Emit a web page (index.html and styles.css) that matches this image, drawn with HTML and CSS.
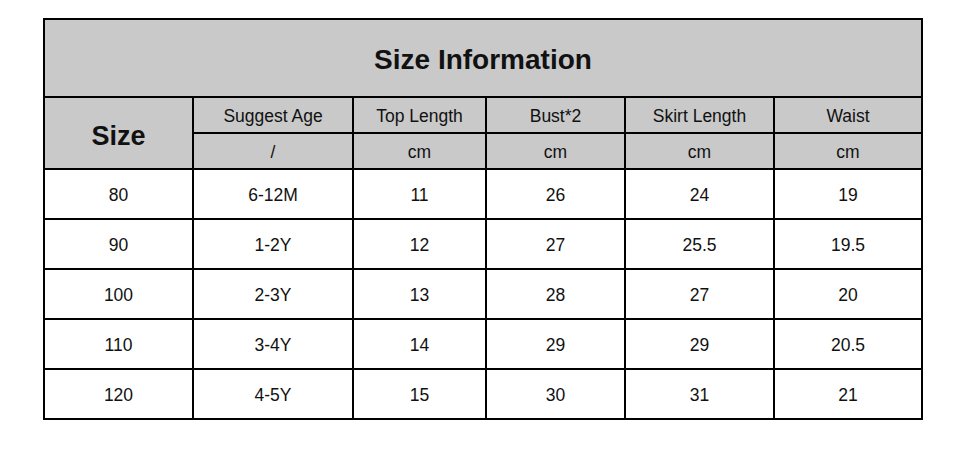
FILE: index.html
```html
<!DOCTYPE html>
<html>
<head>
<meta charset="utf-8">
<link rel="stylesheet" href="styles.css">
</head>
<body>
<div class="size-table">
  <div class="cell head title">Size Information</div>
  <div class="cell head size-label">Size</div>
  <div class="cell head">Suggest Age</div>
  <div class="cell head">Top Length</div>
  <div class="cell head">Bust*2</div>
  <div class="cell head">Skirt Length</div>
  <div class="cell head">Waist</div>
  <div class="cell head">/</div>
  <div class="cell head">cm</div>
  <div class="cell head">cm</div>
  <div class="cell head">cm</div>
  <div class="cell head">cm</div>

  <div class="cell">80</div><div class="cell">6-12M</div><div class="cell">11</div><div class="cell">26</div><div class="cell">24</div><div class="cell">19</div>
  <div class="cell">90</div><div class="cell">1-2Y</div><div class="cell">12</div><div class="cell">27</div><div class="cell">25.5</div><div class="cell">19.5</div>
  <div class="cell">100</div><div class="cell">2-3Y</div><div class="cell">13</div><div class="cell">28</div><div class="cell">27</div><div class="cell">20</div>
  <div class="cell">110</div><div class="cell">3-4Y</div><div class="cell">14</div><div class="cell">29</div><div class="cell">29</div><div class="cell">20.5</div>
  <div class="cell">120</div><div class="cell">4-5Y</div><div class="cell">15</div><div class="cell">30</div><div class="cell">31</div><div class="cell">21</div>
</div>
</body>
</html>
```
FILE: styles.css
```css
html, body {
  margin: 0;
  padding: 0;
  background: #ffffff;
}

body {
  font-family: "Liberation Sans", Arial, sans-serif;
  color: #111111;
}

.size-table {
  display: grid;
  grid-template-columns: 147px 158px 131px 137px 147px 146px;
  grid-template-rows: 76px 34px 34px 48px 48px 48px 48px 48px;
  gap: 2px;
  padding: 2px;
  background: #000000;
  width: 876px;
  margin: 18px 0 0 43px;
}

.cell {
  background: #ffffff;
  display: flex;
  align-items: center;
  justify-content: center;
  font-size: 17.5px;
  padding-top: 2px;
}

.head {
  background: #c9c9c9;
  padding-top: 3px;
}

.title {
  grid-column: 1 / -1;
  font-size: 28px;
  font-weight: bold;
  padding-top: 4px;
}

.size-label {
  grid-row: 2 / 4;
  font-size: 27px;
  font-weight: bold;
  padding-top: 6px;
}
```
